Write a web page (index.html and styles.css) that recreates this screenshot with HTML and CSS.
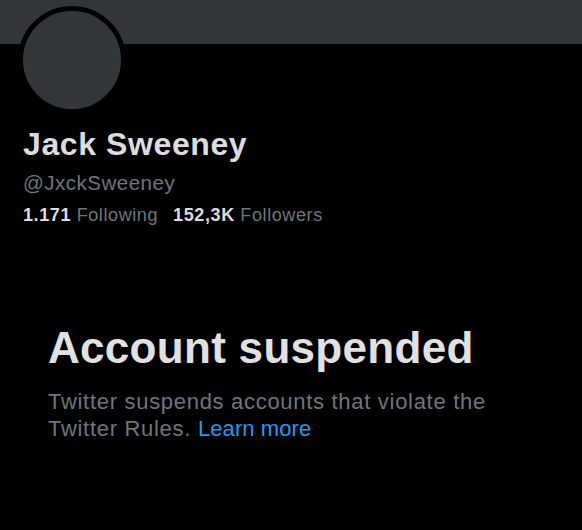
FILE: index.html
```html
<!DOCTYPE html>
<html>
<head>
<meta charset="utf-8">
<link rel="stylesheet" href="styles.css">
</head>
<body>
<div class="page">
  <div class="banner"></div>
  <div class="profile">
    <div class="avatar"></div>
    <div class="name">Jack Sweeney</div>
    <div class="handle">@JxckSweeney</div>
    <div class="stats">
      <span class="stat"><b>1.171</b> Following</span>
      <span class="stat"><b>152,3K</b> Followers</span>
    </div>
  </div>
  <div class="notice">
    <div class="title">Account suspended</div>
    <div class="desc"><span class="line">Twitter suspends accounts that violate the</span> <span class="line">Twitter Rules.</span> <span class="link">Learn more</span></div>
  </div>
</div>
</body>
</html>
```
FILE: styles.css
```css
html, body {
  margin: 0;
  padding: 0;
  background: #000;
}
.page {
  width: 582px;
  height: 530px;
  overflow: hidden;
  background: #000;
  font-family: "Liberation Sans", Arial, sans-serif;
  color: #dcdcdc;
}
.banner {
  height: 44px;
  background: #333639;
}
.profile {
  padding-left: 18px;
}
.avatar {
  width: 98px;
  height: 98px;
  border: 5px solid #000;
  border-radius: 50%;
  background: #333639;
  margin-top: -38px;
}
.name {
  margin-top: 12px;
  margin-left: 5px;
  font-size: 32px;
  font-weight: bold;
  letter-spacing: 0.6px;
  line-height: 36px;
  color: #dcdcdc;
}
.handle {
  margin-top: 8px;
  margin-left: 5px;
  font-size: 20.5px;
  letter-spacing: 0.5px;
  line-height: 26px;
  color: #6e767d;
}
.stats {
  margin-top: 8px;
  margin-left: 5px;
  display: flex;
  gap: 15px;
  font-size: 18px;
  letter-spacing: 0.6px;
  line-height: 22px;
  color: #6e767d;
}
.stat b {
  color: #dcdcdc;
}
.notice {
  padding: 0 48px;
  margin-top: 96px;
}
.title {
  font-size: 44px;
  font-weight: bold;
  letter-spacing: 0.3px;
  line-height: 52px;
  color: #e1e1e1;
}
.desc {
  margin-top: 14px;
  font-size: 22px;
  letter-spacing: 0.7px;
  line-height: 27px;
  color: #6e767d;
  width: 470px;
}
.link {
  color: #1d9bf0;
  letter-spacing: 0.1px;
}
```
